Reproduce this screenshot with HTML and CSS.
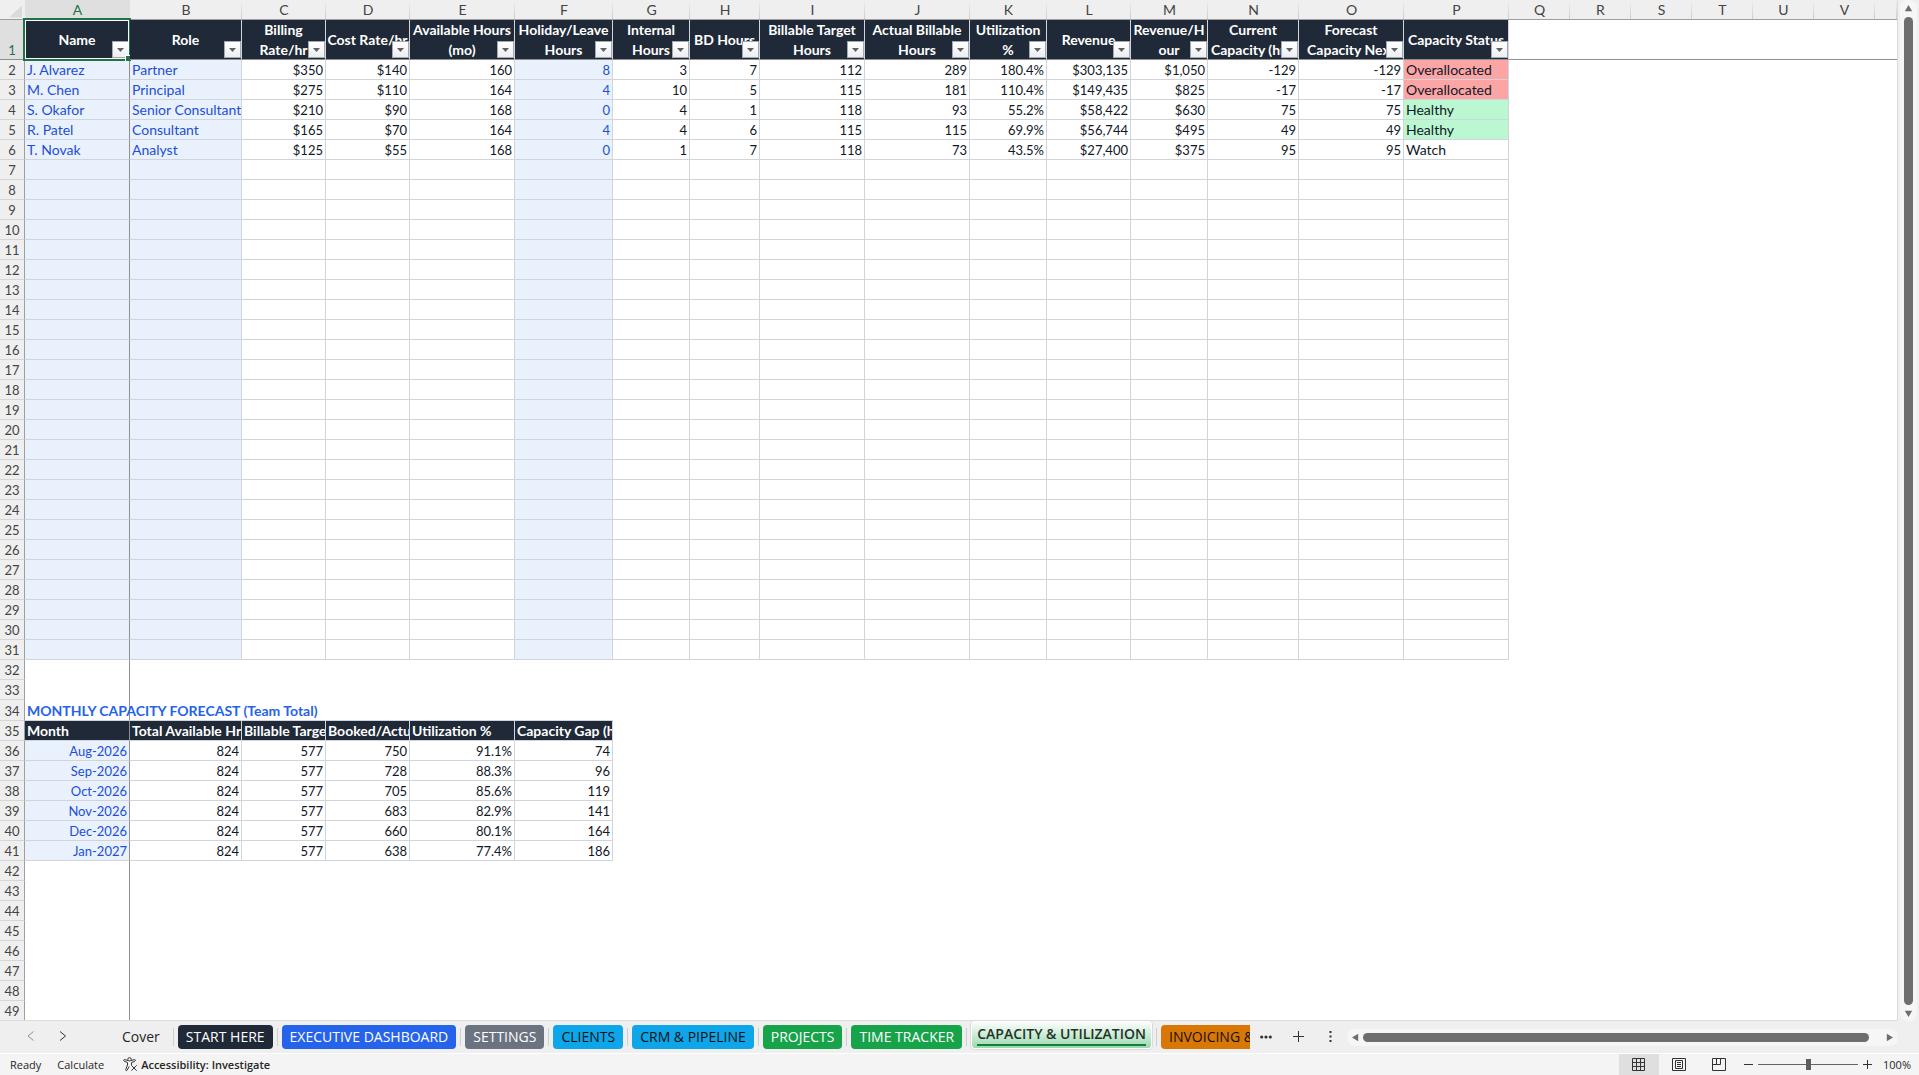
FILE: index.html
```html
<!DOCTYPE html>
<html lang="en">
<head>
<meta charset="utf-8">
<title>Capacity &amp; Utilization</title>
<link rel="stylesheet" href="styles.css">
</head>
<body>
<main class="workspace">
  <div class="sheet">
    <table class="grid">
      <colgroup id="cols"></colgroup>
      <thead id="letters"></thead>
      <tbody id="rows"></tbody>
    </table>
  </div>
  <div class="vscroll">
    <svg class="tri" width="9" height="8" viewBox="0 0 9 8"><path d="M4.5 1 8.2 7.2H.8Z"/></svg>
    <div class="thumb"></div>
    <svg class="tri" width="9" height="8" viewBox="0 0 9 8"><path d="M4.5 7 8.2.8H.8Z"/></svg>
  </div>
</main>

<nav class="tabbar" aria-label="Sheets">
  <div class="arrows">
    <button class="plain dim" aria-label="Previous sheets"><svg width="10" height="12" viewBox="0 0 10 12"><path d="M7.5 1.5 2 6l5.500 4.500"/></svg></button>
    <button class="plain" aria-label="Next sheets"><svg width="10" height="12" viewBox="0 0 10 12"><path d="M2 1.500 7.500 6 2 10.500"/></svg></button>
  </div>
  <div class="tabs">
    <button class="tab cover">Cover</button><i class="sep"></i>
    <button class="tab navy">START HERE</button><i class="sep"></i>
    <button class="tab blue">EXECUTIVE DASHBOARD</button><i class="sep"></i>
    <button class="tab gray">SETTINGS</button><i class="sep"></i>
    <button class="tab sky">CLIENTS</button><i class="sep"></i>
    <button class="tab sky">CRM &amp; PIPELINE</button><i class="sep"></i>
    <button class="tab green">PROJECTS</button><i class="sep"></i>
    <button class="tab green">TIME TRACKER</button><i class="sep"></i>
    <button class="tab active"><span>CAPACITY &amp; UTILIZATION</span></button><i class="sep"></i>
    <button class="tab orange">INVOICING &amp; AR</button>
  </div>
  <div class="tools">
    <button class="plain" aria-label="More sheets"><svg width="12" height="4" viewBox="0 0 12 4"><g class="fill"><circle cx="1.700" cy="2" r="1.600"/><circle cx="6" cy="2" r="1.600"/><circle cx="10.300" cy="2" r="1.600"/></g></svg></button>
    <button class="plain" aria-label="New sheet"><svg width="11" height="11" viewBox="0 0 11 11"><path d="M5.500 0v11M0 5.500h11"/></svg></button>
    <button class="plain" aria-label="Resize tabs"><svg width="3" height="11" viewBox="0 0 3 11"><g class="fill"><path d="M.5 0h2v2h-2zM.5 4.500h2v2h-2zM.5 9h2v2h-2z"/></g></svg></button>
  </div>
  <div class="hscroll">
    <svg class="tri" width="8" height="9" viewBox="0 0 8 9"><path d="M1 4.500 7.200.8v7.400Z"/></svg>
    <div class="thumb"></div>
    <svg class="tri" width="8" height="9" viewBox="0 0 8 9"><path d="M7 4.500.8.8v7.400Z"/></svg>
  </div>
</nav>

<footer class="status">
  <span>Ready</span>
  <span>Calculate</span>
  <button class="plain access">
    <svg width="15" height="15" viewBox="0 0 15 15"><circle cx="6.500" cy="2.300" r="1.700"/><path d="M5 3.500 1.500 2.600C.5 2.500.4 4 1.300 4.300L4.500 5.500v2.500L2.700 12.500c-.3 1 .9 1.600 1.400.7L6.200 9.500M8 3.500l3.600-.9c1-.1 1.100 1.300.2 1.700L8.600 5.500V8M8.300 8.300l5.400 5.400M13.700 8.300 8.300 13.700"/></svg>
    Accessibility: Investigate
  </button>
  <div class="views">
    <button class="view on" aria-label="Normal view"><svg width="14" height="14" viewBox="0 0 14 14"><path d="M.5.5h12v12H.5zM4.500.5v12M8.500.5v12M.5 4.500h12M.5 8.500h12"/></svg></button>
    <button class="view" aria-label="Page layout"><svg width="14" height="14" viewBox="0 0 14 14"><path d="M.5.5h13v12H.5zM3.500 2.500h7v8h-7zM5 4.500h4M5 6.500h4M5 8.500h4"/></svg></button>
    <button class="view" aria-label="Page break preview"><svg width="14" height="14" viewBox="0 0 14 14"><path d="M.5.5h13v12H.5zM4.500.5v6M8.500.5v6M.5 6.500h8"/></svg></button>
  </div>
  <div class="zoom">
    <button class="plain" aria-label="Zoom out"><svg width="9" height="9" viewBox="0 0 9 9"><path d="M0 4.500h9"/></svg></button>
    <input type="range" min="0" max="200" value="101" aria-label="Zoom">
    <button class="plain" aria-label="Zoom in"><svg width="9" height="9" viewBox="0 0 9 9"><path d="M0 4.500h9M4.500 0v9"/></svg></button>
    <span class="pct">100%</span>
  </div>
</footer>
<script src="sheet.js"></script>
</body>
</html>
```
FILE: styles.css
```css
* { box-sizing: border-box; }
body {
  margin: 0;
  height: 100vh;
  display: flex;
  flex-direction: column;
  overflow: hidden;
  background: #efefef;
  color: #262626;
  font: 14px/20px "Open Sans", "Noto Sans", sans-serif;
}
button { border: 0; padding: 0; margin: 0; background: none; font: inherit; color: inherit; }
svg { display: block; fill: none; stroke: #333; }
svg .fill, .tri { fill: #333; stroke: none; }
.tri { fill: #6e6e6e; }

/* Sheet */
.workspace { flex: 1; min-height: 0; display: flex; }
.sheet {
  flex: 1;
  min-width: 0;
  overflow: hidden;
  background: #fff;
  border-right: 1px solid #dcdcdc;
  border-bottom: 1px solid #dcdcdc;
}
.grid {
  width: 100%;
  table-layout: fixed;
  border-collapse: separate;
  border-spacing: 0;
  font: 13px/18px Lato, sans-serif;
  color: #111827;
}
.grid th, .grid td { height: 20px; padding: 1px 2px 0; white-space: nowrap; }
.grid td { overflow: hidden; text-align: right; }
.grid thead th {
  background: linear-gradient(to bottom, #efefef, #cdcdcd) right / 1px 100% no-repeat #efefef;
  border-bottom: 1px solid #9e9e9e;
  color: #444;
  font: 14px/18px Lato, sans-serif;
}
.grid thead th.picked { background: #dfdfdf; color: #217346; }
.grid thead .corner { padding: 4px 3px 0 9px; background: #efefef; }
.corner i { display: block; height: 12px; background: #dadada; clip-path: polygon(100% 0, 100% 100%, 0 100%); }
.grid .num {
  background: #efefef;
  border-right: 1px solid #9e9e9e;
  border-bottom: 1px solid #d6d6d6;
  color: #444;
  font-weight: 400;
  padding: 1px 0 0;
  text-align: center;
}
.grid .num.picked { background: #dfdfdf; color: #217346; vertical-align: bottom; }
.grid .tall td, .grid .tall th { height: 21px; }
.grid .head > * { height: 40px; border-bottom: 1px solid #8f8f8f; }
.grid td.line { border-right: 1px solid #d1d5db; border-bottom: 1px solid #d1d5db; }
.grid .freeze, .grid td.freeze { border-right: 1px solid #8f8f8f; }
.grid .under { border-bottom: 1px solid #d1d5db; }
.grid .input { background: #e9f2fc; color: #1d4ed8; }
.grid .left { text-align: left; font-size: 14px; }
.grid .over { background: #fca5a5; }
.grid .ok { background: #bbf7d0; }
.grid .title { overflow: visible; text-align: left; color: #2563eb; font-weight: 700; font-size: 14px; }
.grid .dark { background: #1f2937; color: #fff; font-weight: 700; font-size: 14px; text-align: left; }
.grid .field {
  position: relative;
  padding: 0;
  background: #1f2937;
  border-right: 1px solid #d1d5db;
  color: #fff;
  font-size: 14px;
  line-height: 20px;
}
.field .label { display: block; max-height: 39px; overflow: hidden; }
.filter {
  position: absolute;
  right: 0;
  bottom: 1px;
  width: 17px;
  height: 17px;
  border: 1px solid #a3a9b1;
  background: linear-gradient(#fff, #eceef1);
}
.filter::after {
  content: "";
  display: block;
  width: 7px;
  height: 4px;
  margin: 1px auto 0;
  background: #5f6368;
  clip-path: polygon(0 0, 100% 0, 50% 100%);
}
.cursor {
  position: absolute;
  inset: -2px;
  border: 2px solid #217346;
  box-shadow: inset 0 0 0 1px #fff;
  pointer-events: none;
}
.cursor::after {
  content: "";
  position: absolute;
  right: -2px;
  bottom: -2px;
  width: 5px;
  height: 5px;
  background: #217346;
  border: solid #fff;
  border-width: 1px 0 0 1px;
}

/* Scroll bars */
.vscroll, .hscroll { display: flex; align-items: center; background: #f6f6f6; border-radius: 8px; }
.vscroll { flex-direction: column; width: 17px; margin: 0 2px; padding: 4px 0 3px; gap: 5px; }
.thumb { background: #6e6e6e; border-radius: 5px; flex: 1; }
.vscroll .thumb { width: 9px; }
.hscroll { width: 551px; height: 17px; padding: 0 4px; }
.hscroll .thumb { height: 9px; margin: 0 17px 0 4px; }

/* Sheet tabs */
.tabbar { display: flex; align-items: center; height: 32px; padding-right: 21px; }
.arrows { display: flex; gap: 22px; width: 108px; padding: 0 0 2px 26px; }
.dim { opacity: .5; }
.tabs { flex: 1; min-width: 0; display: flex; align-items: center; height: 32px; overflow: hidden; }
.tab { flex: none; height: 24px; padding: 0 8px; border-radius: 4px; color: #fff; white-space: nowrap; line-height: 24px; }
.cover { padding: 0 13px 0 14px; color: #262626; }
.sep { flex: none; width: 1px; height: 18px; margin: 0 4px; background: #cfcfcf; }
.cover + .sep { margin-left: 0; }
.navy { background: #1f2937; }
.blue { background: #2563eb; }
.gray { background: #6b7280; }
.sky { background: #0ea5e9; color: #111; }
.green { background: #16a34a; }
.orange { background: #d97706; color: #111; }
.active {
  align-self: flex-start;
  height: 28px;
  padding: 3px 5px 0;
  border: 1px solid #fff;
  border-top: 0;
  background: linear-gradient(#fff, #9bd8af);
  box-shadow: 0 0 0 1px #dadada;
  color: #1f3327;
  font-weight: 600;
}
.active span { display: block; height: 20px; line-height: 16px; border-bottom: 2px solid #15803d; }
.tools { display: flex; align-items: center; width: 97px; gap: 21px; padding: 0 0 1px 10px; }
.tools button:last-child { margin-left: 4px; }

/* Status bar */
.status {
  display: flex;
  align-items: center;
  height: 22px;
  padding-left: 10px;
  gap: 16px;
  border-top: 1px solid #fff;
  background: #f4f4f4;
  font-size: 11px;
}
.access { display: flex; align-items: center; gap: 3px; margin-left: 3px; font-weight: 600; }
.views { display: flex; margin-left: auto; height: 100%; }
.view { width: 40px; display: grid; place-items: center; }
.on { background: #dfdfdf; }
.zoom { display: flex; align-items: center; gap: 5px; padding-right: 8px; margin-left: -11px; }
.zoom input { appearance: none; width: 100px; height: 12px; margin: 0; background: linear-gradient(#666, #666) center / 100% 1px no-repeat; }
.zoom input::-webkit-slider-thumb { appearance: none; width: 5px; height: 11px; background: #5e5e5e; }
.pct { margin-left: 6px; }
```
FILE: sheet.js
```js
const widths = [25, 105, 112, 84, 84, 105, 98, 77, 70, 105, 105, 77, 84, 77, 91, 105, 105, 61, 61, 61, 61, 61, 61];
const fields = ["Name", "Role", "Billing<br>Rate/hr", "Cost Rate/hr", "Available Hours<br>(mo)", "Holiday/Leave<br>Hours",
  "Internal<br>Hours", "BD Hours", "Billable Target<br>Hours", "Actual Billable<br>Hours", "Utilization<br>%", "Revenue",
  "Revenue/H<br>our", "Current<br>Capacity (hrs)", "Forecast<br>Capacity Next", "Capacity Status"];
const team = [
  ["J. Alvarez", "Partner", "$350", "$140", 160, 8, 3, 7, 112, 289, "180.4%", "$303,135", "$1,050", -129, -129, "Overallocated"],
  ["M. Chen", "Principal", "$275", "$110", 164, 4, 10, 5, 115, 181, "110.4%", "$149,435", "$825", -17, -17, "Overallocated"],
  ["S. Okafor", "Senior Consultant", "$210", "$90", 168, 0, 4, 1, 118, 93, "55.2%", "$58,422", "$630", 75, 75, "Healthy"],
  ["R. Patel", "Consultant", "$165", "$70", 164, 4, 4, 6, 115, 115, "69.9%", "$56,744", "$495", 49, 49, "Healthy"],
  ["T. Novak", "Analyst", "$125", "$55", 168, 0, 1, 7, 118, 73, "43.5%", "$27,400", "$375", 95, 95, "Watch"]
];
const forecastHead = ["Month", "Total Available Hrs", "Billable Target", "Booked/Actual", "Utilization %", "Capacity Gap (hrs)"];
const forecast = [
  ["Aug-2026", 824, 577, 750, "91.1%", 74],
  ["Sep-2026", 824, 577, 728, "88.3%", 96],
  ["Oct-2026", 824, 577, 705, "85.6%", 119],
  ["Nov-2026", 824, 577, 683, "82.9%", 141],
  ["Dec-2026", 824, 577, 660, "80.1%", 164],
  ["Jan-2027", 824, 577, 638, "77.4%", 186]
];
const statusClass = { Overallocated: " over", Healthy: " ok" };

const cell = (text, cls) => `<td class="${cls}">${text}</td>`;
const freeze = i => (i === 0 ? " freeze" : "");

function rowCells(n) {
  if (n === 1) {
    return fields.map((f, i) =>
      `<th scope="col" class="field${freeze(i)}"><span class="label">${f}</span>` +
      `<button class="filter" aria-label="Filter"></button>${i === 0 ? '<i class="cursor"></i>' : ""}</th>`
    ).join("") + '<td colspan="7"></td>';
  }
  if (n <= 31) {
    const person = team[n - 2] || Array(16).fill("");
    return person.map((v, i) => {
      const input = i < 2 || i === 5 ? " input" : "";
      const left = i < 2 || i === 15 ? " left" : "";
      return cell(v, "line" + input + left + freeze(i) + (i === 15 ? statusClass[v] || "" : ""));
    }).join("");
  }
  if (n === 34) {
    return cell("MONTHLY CAPACITY FORECAST (Team Total)", "title under freeze") + cell("", "under").repeat(5);
  }
  if (n === 35) return forecastHead.map((v, i) => cell(v, "line dark" + freeze(i))).join("");
  if (n >= 36 && n <= 41) {
    return forecast[n - 36].map((v, i) => cell(v, "line" + (i === 0 ? " input" : "") + freeze(i))).join("");
  }
  return cell("", "freeze");
}

document.getElementById("cols").innerHTML = widths.map(w => `<col style="width:${w}px">`).join("") + "<col>";
document.getElementById("letters").innerHTML = '<tr><th class="corner"><i></i></th>' +
  [..."ABCDEFGHIJKLMNOPQRSTUV"].map((c, i) => `<th scope="col"${i ? "" : ' class="picked"'}>${c}</th>`).join("") + "<th></th></tr>";

let html = "";
for (let n = 1; n <= 49; n++) {
  const rowClass = n === 1 ? "head" : n === 34 ? "tall" : "";
  html += `<tr class="${rowClass}"><th scope="row" class="num${n === 1 ? " picked" : ""}">${n}</th>${rowCells(n)}</tr>`;
}
document.getElementById("rows").innerHTML = html;
```
